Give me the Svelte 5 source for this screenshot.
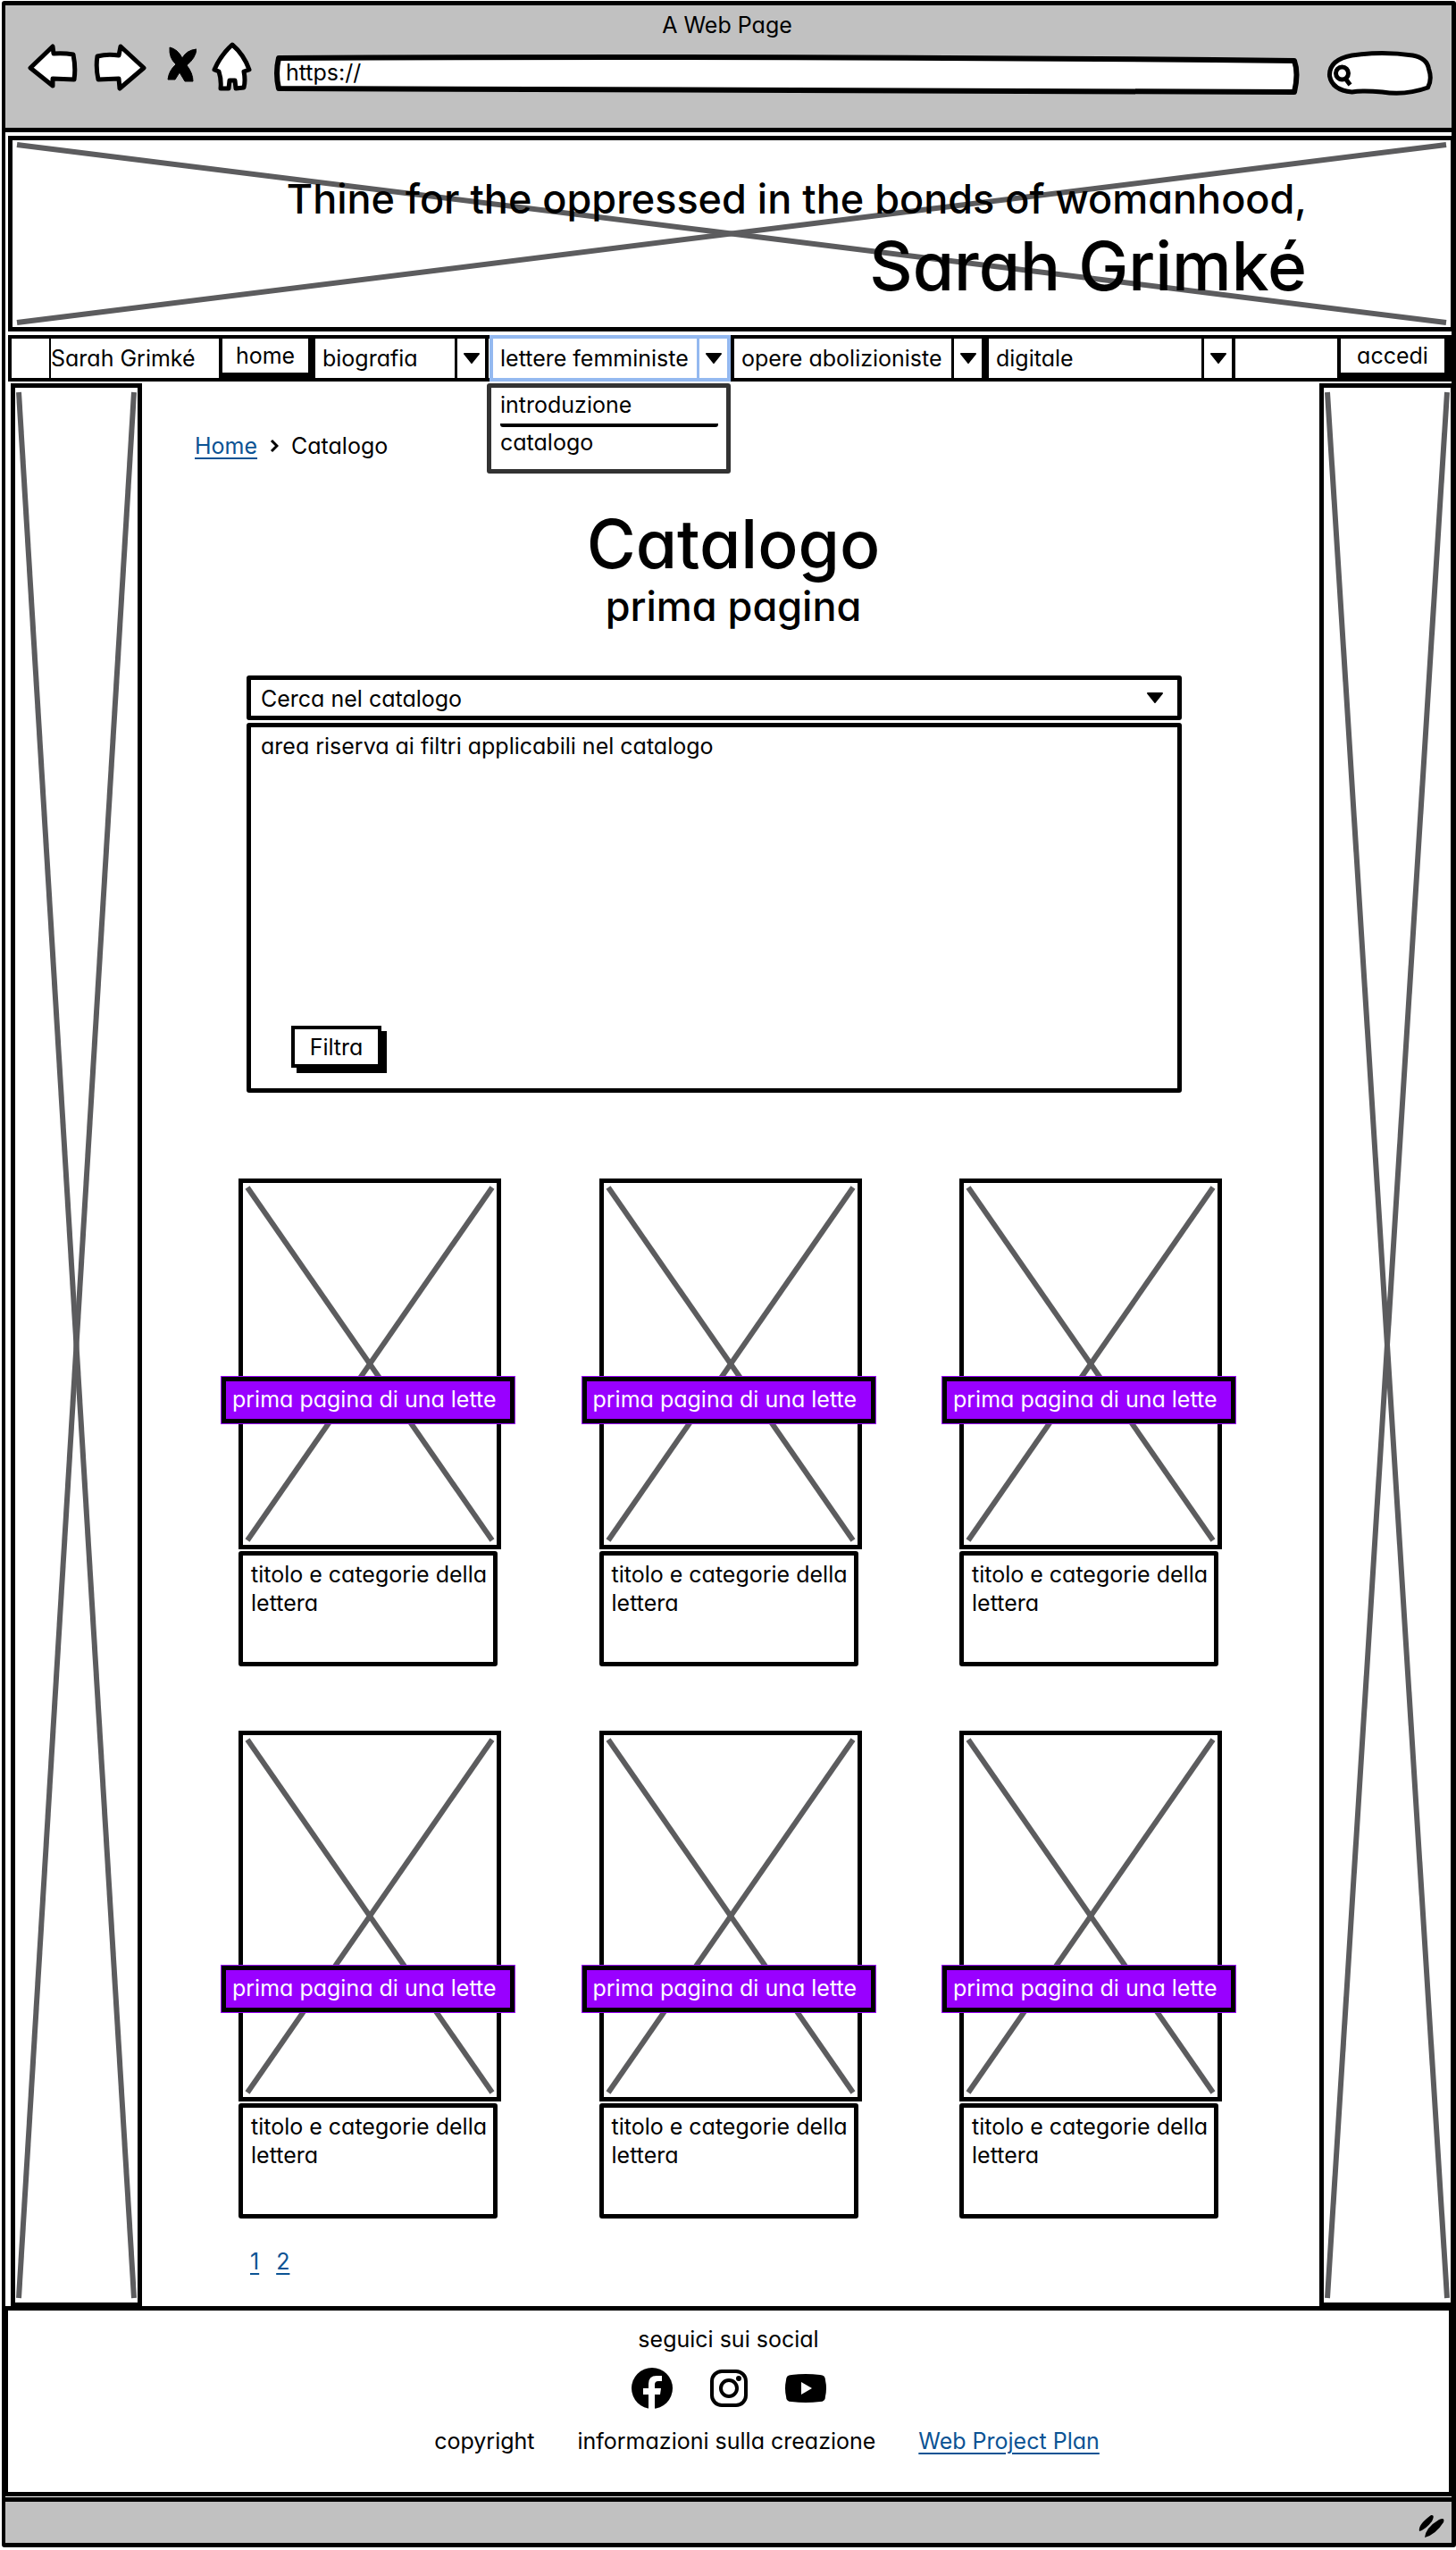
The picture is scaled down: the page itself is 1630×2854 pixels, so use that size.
<script>
  const letters = [0, 1, 2, 3, 4, 5];
  let query = $state('');
</script>

{#snippet cross()}
  <svg class="cross" aria-hidden="true">
    <line x1="0" y1="0" x2="100%" y2="100%" />
    <line x1="100%" y1="0" x2="0" y2="100%" />
  </svg>
{/snippet}

{#snippet arrow()}
  <svg class="arrow" viewBox="0 0 20 12" aria-hidden="true">
    <path d="M2 1h16l-8 10z" />
  </svg>
{/snippet}

{#snippet combo(name)}
  <div class="combo {name.split(' ')[0]}">
    <select aria-label={name}><option>{name}</option></select>
    <span class="toggle">{@render arrow()}</span>
  </div>
{/snippet}

<div class="window">
  <div class="toolbar">
    <div class="title">A Web Page</div>
    <div class="tools">
      <button class="tool back" aria-label="Indietro">
        <svg viewBox="0 0 57 60"><path d="M3 29 28 5 29 13Q40 12 51 14Q54 29 52 42L28 41 28 49Z" /></svg>
      </button>
      <button class="tool next" aria-label="Avanti">
        <svg viewBox="0 0 60 60"><path d="M5 16Q16 13 29 15L31 5 57 29 30 52 29 41 6 42Q3 28 5 16Z" /></svg>
      </button>
      <button class="tool stop" aria-label="Interrompi">
        <svg viewBox="0 0 40 60"><path class="solid" d="M10 6Q19 8 24 18Q29 9 40 8Q39 18 29 26Q36 35 36 44L27 44 21 34 16 42 8 42Q9 32 17 25Q9 18 10 6Z" /></svg>
      </button>
      <button class="tool up" aria-label="Inizio">
        <svg viewBox="0 0 48 60"><path d="M24 3Q37 14 43 31L37 33Q39 43 37 51L28 52 27 43 21 43 20 52 11 52Q12 42 9 33L4 31Q11 15 24 3Z" /></svg>
      </button>
      <label class="address">
        <svg viewBox="0 0 1148 44" preserveAspectRatio="none" aria-hidden="true">
          <path d="M4 3Q580 0 1143 6Q1148 20 1143 41Q580 41 4 37Q0 20 4 3Z" />
        </svg>
        <input type="text" aria-label="Indirizzo" value="https://" />
      </label>
      <label class="find">
        <svg viewBox="0 0 119 50" aria-hidden="true">
          <path d="M28 46Q6 44 3 28Q2 10 28 5Q62 0 96 5Q112 8 114 20Q118 32 113 41Q88 50 62 46Q40 44 28 46Z" />
          <circle cx="17" cy="25" r="7" />
          <path d="M20 30l6 8" />
        </svg>
        <input type="text" aria-label="Cerca" bind:value={query} />
      </label>
    </div>
  </div>

  <div class="page">
    <header>
      {@render cross()}
      <p class="motto">Thine for the oppressed in the bonds of womanhood,</p>
      <p class="name">Sarah Grimké</p>
    </header>

    <nav>
      <span class="mark"></span>
      <a class="brand" href="#top">Sarah Grimké</a>
      <button class="push home">home</button>
      {@render combo('biografia')}
      <div class="combo active">
        <button aria-haspopup="true" aria-expanded="true">lettere femministe</button>
        <span class="toggle">{@render arrow()}</span>
        <ul class="menu">
          <li><a href="#introduzione">introduzione</a></li>
          <li><a href="#catalogo">catalogo</a></li>
        </ul>
      </div>
      {@render combo('opere abolizioniste')}
      {@render combo('digitale')}
      <button class="push login">accedi</button>
    </nav>

    <div class="columns">
      <aside>{@render cross()}</aside>
      <main>
        <div class="crumbs">
          <a href="#home">Home</a>
          <svg viewBox="0 0 10 16" aria-hidden="true"><path d="M2 2l6 6-6 6" /></svg>
          <span>Catalogo</span>
        </div>
        <h1>Catalogo</h1>
        <h2>prima pagina</h2>

        <section class="filters">
          <div class="search">
            <select aria-label="Cerca nel catalogo"><option>Cerca nel catalogo</option></select>
            {@render arrow()}
          </div>
          <div class="panel">
            <p>area riserva ai filtri applicabili nel catalogo</p>
            <button class="apply">Filtra</button>
          </div>
        </section>

        <section class="cards">
          {#each letters as i (i)}
            <article>
              <div class="picture" class:low={i > 2}>
                {@render cross()}
                <div class="banner">prima pagina di una lette</div>
              </div>
              <p class="caption">titolo e categorie della<br />lettera</p>
            </article>
          {/each}
        </section>

        <div class="pages">
          <a href="#1">1</a>
          <a href="#2">2</a>
        </div>
      </main>
      <aside>{@render cross()}</aside>
    </div>
  </div>

  <footer>
    <p>seguici sui social</p>
    <div class="social">
      <a href="#facebook" aria-label="Facebook">
        <svg viewBox="0 0 48 48"><circle cx="24" cy="24" r="23" /><path class="cut" d="M20 47V31h-6v-7h6v-5q0-9 9-9h6v6h-4q-4 0-4 4v4h7l-1 7h-6v16z" /></svg>
      </a>
      <a href="#instagram" aria-label="Instagram">
        <svg viewBox="0 0 48 48"><rect class="line" x="5" y="5" width="38" height="38" rx="11" /><circle class="line" cx="24" cy="24" r="9" /><circle cx="35" cy="13" r="3" /></svg>
      </a>
      <a href="#youtube" aria-label="YouTube">
        <svg viewBox="0 0 48 48"><path d="M8 9Q24 7 40 9Q46 9 46 15Q48 24 46 33Q46 39 40 39Q24 41 8 39Q2 39 2 33Q0 24 2 15Q2 9 8 9Z" /><path class="cut" d="M19 17l12 7-12 7z" /></svg>
      </a>
    </div>
    <div class="links">
      <span>copyright</span>
      <span>informazioni sulla creazione</span>
      <a href="#plan">Web Project Plan</a>
    </div>
  </footer>

  <div class="status">
    <svg viewBox="0 0 32 28" aria-hidden="true">
      <path d="M2 19Q0 12 15 1Q20 0 16 8Q9 17 2 19Z" />
      <path d="M8 26Q9 15 24 6Q31 3 29 9Q20 23 8 26Z" />
    </svg>
  </div>
</div>

<style>
  :global(body) {
    background: #fff;
  }
  .window,
  .window :global(*) {
    box-sizing: border-box;
  }
  .window {
    margin: 1px 0 0 2px;
    border: solid #000;
    border-width: 5px 5px 5px 4px;
    border-radius: 3px;
    font: 400 25px/32px Inter, 'Open Sans', sans-serif;
    font-feature-settings: 'cv11';
    color: #000;
  }
  p,
  h1,
  h2,
  ul {
    margin: 0;
    padding: 0;
    font-weight: 400;
  }
  button,
  input,
  select {
    font: inherit;
    font-feature-settings: inherit;
    color: inherit;
    background: none;
    border: 0;
    border-radius: 0;
    padding: 0;
    margin: 0;
    outline: 0;
    appearance: none;
    min-width: 0;
  }
  a {
    color: inherit;
    text-decoration: none;
  }

  .toolbar {
    background: #c1c1c1;
    border-bottom: 5px solid #000;
    padding: 6px 20px 36px 25px;
  }
  .title {
    text-align: center;
    margin-bottom: 3px;
    padding-right: 8px;
  }
  .tools {
    display: flex;
    gap: 16px;
    height: 60px;
  }
  .tools svg {
    display: block;
    height: 100%;
    fill: #fff;
    stroke: #000;
    stroke-width: 5;
    stroke-linejoin: round;
  }
  .tools .solid {
    fill: #000;
    stroke-width: 1;
  }
  .back { width: 57px; }
  .next { width: 60px; }
  .stop { width: 40px; }
  .up { width: 48px; }
  .address {
    position: relative;
    flex: 1;
    margin: 15px 8px 0;
    height: 44px;
  }
  .address svg,
  .find svg {
    position: absolute;
    inset: 0;
    width: 100%;
    height: 100%;
    overflow: visible;
  }
  .address path {
    stroke-width: 6;
    vector-effect: non-scaling-stroke;
  }
  .address input {
    position: relative;
    width: 100%;
    height: 38px;
    padding-left: 12px;
  }
  .find {
    position: relative;
    width: 120px;
    height: 50px;
    margin: 10px 0 0 7px;
  }
  .find input {
    position: relative;
    width: 100%;
    height: 100%;
    padding: 0 12px 0 32px;
  }

  .page {
    padding: 4px 0 0 3px;
  }
  .cross {
    position: absolute;
    inset: 5px;
    width: calc(100% - 10px);
    height: calc(100% - 10px);
    overflow: visible;
  }
  .cross line {
    stroke: #5c5c5e;
    stroke-width: 6;
  }
  header {
    position: relative;
    height: 219px;
    border: 5px solid #000;
    border-right-width: 1px;
    padding: 36px 161px 0 0;
    text-align: right;
  }
  header p {
    position: relative;
    font-weight: 500;
  }
  .motto {
    font-size: 45px;
    line-height: 60px;
  }
  .name {
    font-size: 75px;
    line-height: 90px;
  }

  nav {
    display: flex;
    height: 52px;
    margin-top: 4px;
    border: 4px solid #000;
    line-height: 36px;
  }
  .mark {
    width: 44px;
    border-right: 2px solid #000;
  }
  .brand {
    width: 188px;
    padding-top: 4px;
    white-space: nowrap;
  }
  .push {
    border: solid #000;
    border-width: 0 8px 6px 4px;
    text-align: center;
  }
  .home { width: 108px; }
  .login {
    width: 124px;
    border-right-width: 4px;
    margin-left: auto;
  }
  .combo {
    position: relative;
    display: flex;
    border-right: 4px solid #000;
  }
  .combo select,
  .combo > button {
    flex: 1;
    padding-left: 8px;
    text-align: left;
    white-space: nowrap;
  }
  .toggle {
    display: grid;
    place-items: center;
    width: 34px;
    border-left: 3px solid #000;
  }
  .arrow {
    width: 20px;
    height: 12px;
    stroke: #000;
    stroke-width: 2;
    stroke-linejoin: round;
  }
  .biografia { width: 194px; }
  .active {
    width: 262px;
    margin: 0 4px 0 5px;
    border: 0;
    outline: 4px solid #94b9f0;
  }
  .active .toggle {
    border-color: #94b9f0;
  }
  .opere {
    width: 285px;
    border-left: 4px solid #000;
  }
  .digitale {
    width: 280px;
    border-left: 4px solid #000;
  }
  .menu {
    position: absolute;
    z-index: 2;
    left: -7px;
    top: 50px;
    width: 273px;
    height: 101px;
    padding: 2px 9px 0 10px;
    border: 5px solid #333;
    border-radius: 3px;
    background: #fff;
    line-height: 34px;
    list-style: none;
  }
  .menu li:first-child {
    border-bottom: 4px solid #000;
    border-radius: 0 0 3px 3px;
    padding-bottom: 4px;
  }

  .columns {
    display: grid;
    grid-template-columns: 147px 1fr 148px;
    margin: 2px 0 0 3px;
  }
  aside {
    position: relative;
    border: 5px solid #000;
    border-bottom-width: 4px;
  }
  aside + main + aside {
    border-right-width: 1px;
  }
  aside .cross {
    inset: 5px 4px;
    width: calc(100% - 8px);
  }
  main {
    padding: 54px 0 34px;
  }
  .crumbs {
    display: flex;
    align-items: center;
    gap: 14px;
    padding-left: 59px;
  }
  .crumbs svg {
    width: 10px;
    height: 16px;
    fill: none;
    stroke: #000;
    stroke-width: 3;
  }
  .crumbs a,
  .pages a,
  .links a {
    color: #0b5394;
    text-decoration: underline;
    text-decoration-thickness: 2px;
    text-underline-offset: 4px;
  }
  h1,
  h2 {
    padding-left: 6px;
    font-weight: 500;
    text-align: center;
  }
  h1 {
    margin-top: 50px;
    font-size: 75px;
    line-height: 88px;
  }
  h2 {
    font-size: 45px;
    line-height: 52px;
  }
  .filters {
    margin: 51px 154px 0 117px;
  }
  .search {
    display: flex;
    align-items: center;
    height: 50px;
    padding-right: 15px;
    border: 5px solid #000;
    border-radius: 3px;
  }
  .search select {
    flex: 1;
    padding: 2px 0 0 11px;
  }
  .panel {
    display: flex;
    flex-direction: column;
    align-items: flex-start;
    justify-content: space-between;
    height: 414px;
    margin-top: 3px;
    padding: 5px 11px 23px;
    border: 5px solid #000;
    border-radius: 3px;
  }
  .apply {
    width: 101px;
    height: 47px;
    margin-left: 34px;
    border: 4px solid #000;
    box-shadow: 6px 6px 0 #000;
  }
  .cards {
    display: grid;
    grid-template-columns: repeat(3, 294px);
    justify-content: space-between;
    row-gap: 72px;
    margin: 96px 109px 0 108px;
  }
  .picture {
    position: relative;
    height: 415px;
    border: 5px solid #000;
  }
  .banner {
    position: absolute;
    left: -24px;
    top: 217px;
    width: 328px;
    height: 52px;
    padding: 4px 7px;
    border: 5px solid #000;
    background: #90f;
    outline: 1px solid #90f;
    color: #fff;
    white-space: nowrap;
  }
  .low .banner {
    top: 258px;
  }
  .caption {
    width: 290px;
    height: 129px;
    margin-top: 2px;
    padding: 5px 0 0 9px;
    border: 5px solid #000;
    border-radius: 3px;
    white-space: nowrap;
  }
  .pages {
    display: flex;
    gap: 19px;
    margin: 32px 0 0 121px;
  }

  footer {
    border: 5px solid #000;
    border-right-width: 3px;
    padding: 16px 0 41px;
    text-align: center;
    margin-left: -2px;
  }
  .social {
    display: flex;
    justify-content: center;
    gap: 38px;
    margin: 15px 0 19px;
  }
  .social svg {
    display: block;
    width: 48px;
    height: 48px;
  }
  .social .cut {
    fill: #fff;
  }
  .social .line {
    fill: none;
    stroke: #000;
    stroke-width: 4;
  }
  .links {
    display: flex;
    justify-content: center;
    gap: 48px;
    padding-left: 86px;
  }
  .status {
    display: flex;
    justify-content: flex-end;
    align-items: center;
    height: 51px;
    margin-top: 1px;
    padding: 10px 6px 0 0;
    border-top: 5px solid #000;
    background: #c1c1c1;
  }
  .status svg {
    width: 32px;
    height: 28px;
  }
</style>
